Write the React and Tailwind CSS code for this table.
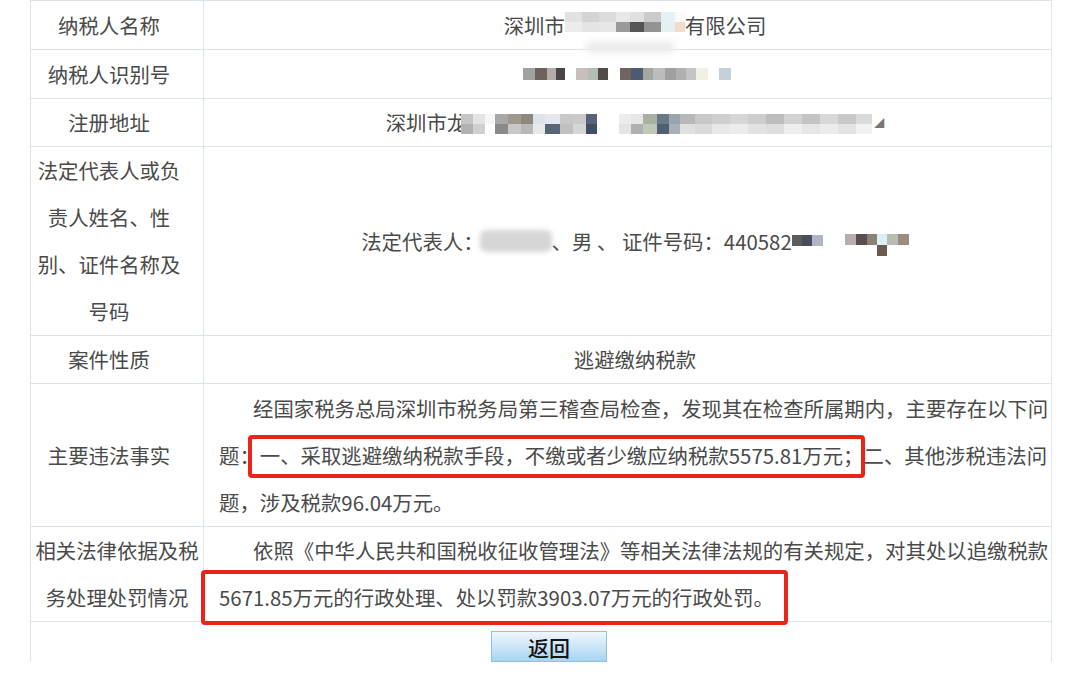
import React from 'react';

// mosaic blocks used to hide private data: each column is [width, topColor, bottomColor]
function Mosaic({ cols, h = 10, className = '' }) {
  return (
    <span className={`inline-flex align-middle ${className}`}>
      {cols.map(([w, top, bottom], i) => (
        <span key={i} className="flex flex-col" style={{ width: w }}>
          <span style={{ height: h, backgroundColor: top || 'transparent' }} />
          {bottom !== undefined && (
            <span style={{ height: h, backgroundColor: bottom || 'transparent' }} />
          )}
        </span>
      ))}
    </span>
  );
}

const nameMosaic = [
  [17, '#e2e2e2', '#ececec'],
  [17, '#d4d4d4', '#e4e4e4'],
  [17, '#dcdcdc', '#e6e6e6'],
  [14, '#e8e8e8', '#9a9a9a'],
  [14, '#e0e0e0', '#555555'],
  [17, '#cbcbcb', '#939393'],
  [14, '#e4f1f6', '#e6f0f3'],
  [10, '#fafafa', '#f4dccd'],
];

const idMosaic = [
  [12, '#a2a2a2'],
  [12, '#6e625e'],
  [9, '#b4acaa'],
  [9, '#4a4646'],
  [11, null],
  [12, '#c8beba'],
  [10, '#b4bcb6'],
  [10, '#504c48'],
  [12, null],
  [11, '#706460'],
  [12, '#4e5a70'],
  [10, '#a4a6a2'],
  [12, '#bcbcbc'],
  [11, '#a0a0a0'],
  [10, '#b0b0b0'],
  [10, '#c4c4c4'],
  [12, '#f0f0e4'],
  [11, null],
  [12, '#c4d0d8'],
];

const addrMosaic = [
  [12, '#c6c6c6', '#b2b2b2'],
  [12, '#e4e4e4', '#d0d0d0'],
  [10, '#f6f6f6', '#ffffff'],
  [13, '#a8a8a8', '#8a8a8a'],
  [13, '#a09890', '#c8c8c8'],
  [12, '#8c8880', '#b8b8b8'],
  [12, '#dde3ea', '#e8e8e8'],
  [15, '#e4e8ee', '#5a6478'],
  [13, '#c8c8c8', '#c0c0c0'],
  [13, '#cacaca', '#d6d6d6'],
  [11, '#5a6478', '#3f4d66'],
  [22, null, null],
  [12, '#ececec', '#e4e4e4'],
  [12, '#e6e6e6', '#b0b0b0'],
  [14, '#a8b0a0', '#c0c8b8'],
  [12, '#6a7888', '#506070'],
  [11, '#9aa4ac', '#a8b0b8'],
  [15, '#b8b8b8', '#e0e0e0'],
  [17, '#c8c8c8', '#dadada'],
  [18, '#cfcfcf', '#e8e8e8'],
  [18, '#d6d6d6', '#ececec'],
  [18, '#cdcdcd', '#e2e2e2'],
  [18, '#bdbdbd', '#dedede'],
  [18, '#d2d2d2', '#eeeeee'],
  [18, '#c4c4c4', '#e6e6e6'],
  [18, '#d8d8d8', '#ececec'],
  [18, '#c9c9c9', '#e4e4e4'],
  [16, '#dadada', '#f2f2f2'],
];

const certMosaic1 = [
  [10, '#5c5c5c'],
  [10, '#4a4e5a'],
  [11, '#b0b4c4'],
];

const certMosaic2 = [
  [11, '#b8aeb0', null],
  [11, '#5a4e4e', null],
  [10, '#8a8276', null],
  [10, '#dcf0f4', '#6a5a50'],
  [11, '#b8bcae', null],
  [11, '#9a8c80', null],
];

function Label({ children, className = '' }) {
  return (
    <div
      className={`flex flex-col items-center justify-center border-r border-[#dbe4ea] pr-[16px] text-center ${className}`}
    >
      {children}
    </div>
  );
}

function Value({ children, className = '' }) {
  return (
    <div className={`flex items-center justify-center pl-[15px] whitespace-nowrap ${className}`}>
      {children}
    </div>
  );
}

export default function App() {
  return (
    <div className="min-h-[684px] bg-white font-['Noto_Sans_CJK_SC','Noto_Sans',sans-serif] text-[20.4px] text-[#4a4a4a]">
      <div className="ml-[30px] w-[1022px] border-x border-t border-[#dbe4ea]">
        {/* 纳税人名称 */}
        <div className="grid h-[49px] grid-cols-[173px_1fr] border-b border-[#dbe4ea]">
          <Label>纳税人名称</Label>
          <Value>
            <span>深圳市</span>
            <span className="relative inline-flex">
              <Mosaic cols={nameMosaic} h={10} className="blur-[0.6px] -translate-y-[3px]" />
              <span className="absolute left-[20px] top-[26px] h-[12px] w-[90px] rounded-full bg-[#ececec] blur-[3px]" />
            </span>
            <span>有限公司</span>
          </Value>
        </div>

        {/* 纳税人识别号 */}
        <div className="grid h-[49px] grid-cols-[173px_1fr] border-b border-[#dbe4ea]">
          <Label>纳税人识别号</Label>
          <Value>
            <Mosaic cols={idMosaic} h={12} className="blur-[0.6px] -translate-x-[8px]" />
          </Value>
        </div>

        {/* 注册地址 */}
        <div className="grid h-[48px] grid-cols-[173px_1fr] border-b border-[#dbe4ea]">
          <Label>注册地址</Label>
          <Value>
            <span>深圳市龙</span>
            <Mosaic cols={addrMosaic} h={10} className="-ml-[6px] blur-[0.6px] translate-y-[1px]" />
            <span className="ml-[2px] text-[10px] text-[#777]">◢</span>
          </Value>
        </div>

        {/* 法定代表人 */}
        <div className="grid h-[189px] grid-cols-[173px_1fr] border-b border-[#dbe4ea]">
          <Label className="leading-[47px] whitespace-nowrap">
            <span>法定代表人或负</span>
            <span>责人姓名、性</span>
            <span>别、证件名称及</span>
            <span>号码</span>
          </Label>
          <Value>
            <span>法定代表人：</span>
            <span className="-ml-[4px] h-[22px] w-[72px] rounded-[6px] bg-[#d6d6d6] blur-[2.5px]" />
            <span>、男 、 证件号码：440582</span>
            <Mosaic cols={certMosaic1} h={11} className="blur-[0.5px] -translate-y-[1px]" />
            <span className="w-[22px]" />
            <Mosaic cols={certMosaic2} h={11} className="blur-[0.5px] translate-y-[4px]" />
          </Value>
        </div>

        {/* 案件性质 */}
        <div className="grid h-[48px] grid-cols-[173px_1fr] border-b border-[#dbe4ea]">
          <Label>案件性质</Label>
          <Value>逃避缴纳税款</Value>
        </div>

        {/* 主要违法事实 */}
        <div className="grid h-[143px] grid-cols-[173px_1fr] border-b border-[#dbe4ea]">
          <Label>主要违法事实</Label>
          <div className="relative flex flex-col justify-center pl-[15px] leading-[47px] whitespace-nowrap">
            <span className="pl-[34px]">
              经国家税务总局深圳市税务局第三稽查局检查，发现其在检查所属期内，主要存在以下问
            </span>
            <span>题：一、采取逃避缴纳税款手段，不缴或者少缴应纳税款5575.81万元；二、其他涉税违法问</span>
            <span>题，涉及税款96.04万元。</span>
            <div className="absolute left-[44px] top-[51px] z-10 h-[43px] w-[617px] rounded-[4px] border-[4px] border-[#e8241d]" />
          </div>
        </div>

        {/* 相关法律依据 */}
        <div className="grid h-[95px] grid-cols-[173px_1fr] border-b border-[#dbe4ea]">
          <div className="flex flex-col items-center justify-center border-r border-[#dbe4ea] leading-[47px] whitespace-nowrap">
            <span>相关法律依据及税</span>
            <span>务处理处罚情况</span>
          </div>
          <div className="relative flex flex-col justify-center pl-[15px] leading-[47px] whitespace-nowrap">
            <span className="pl-[34px]">
              依照《中华人民共和国税收征收管理法》等相关法律法规的有关规定，对其处以追缴税款
            </span>
            <span>5671.85万元的行政处理、处以罚款3903.07万元的行政处罚。</span>
            <div className="absolute -left-[3px] top-[43px] z-10 h-[55px] w-[587px] rounded-[4px] border-[4px] border-[#e8241d]" />
          </div>
        </div>

        {/* 返回 */}
        <div className="flex h-[40px] justify-center overflow-hidden pl-[16px]">
          <button className="mt-[9px] h-[31px] w-[116px] border border-[#92c0e0] bg-linear-to-b from-[#eef7fd] to-[#a8d4f0] text-[21px] font-medium leading-[28px] text-[#151515]">
            返回
          </button>
        </div>
      </div>
    </div>
  );
}
